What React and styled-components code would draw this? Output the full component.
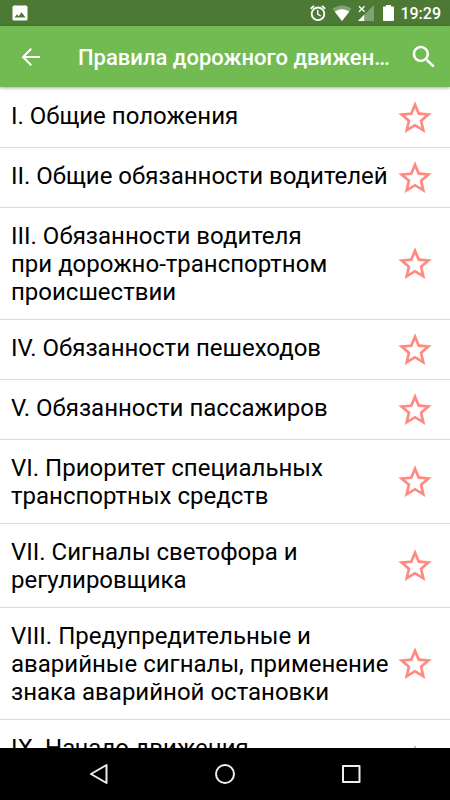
import React, { useState } from "react";
import styled, { createGlobalStyle } from "styled-components";

const GlobalStyle = createGlobalStyle`
  * {
    box-sizing: border-box;
  }
  body {
    margin: 0;
    font-family: Roboto, "Noto Sans", sans-serif;
    background: #fff;
  }
`;

const Screen = styled.div`
  display: flex;
  flex-direction: column;
  height: 100vh;
  overflow: hidden;
`;

const StatusBar = styled.div`
  display: flex;
  align-items: center;
  justify-content: space-between;
  flex: none;
  height: 26px;
  padding: 0 9px 0 12px;
  background: #4c7a34;
  color: #fff;
`;

const StatusIcons = styled.div`
  display: flex;
  align-items: center;
`;

const StatusIcon = styled.svg`
  display: block;
  width: ${props => props.$width}px;
  height: 16px;
  margin-right: ${props => props.$gap || 0}px;
`;

const Clock = styled.time`
  padding-top: 2px;
  font-size: 16px;
  font-weight: 500;
  line-height: 20px;
`;

const Toolbar = styled.header`
  position: relative;
  z-index: 1;
  display: flex;
  align-items: center;
  flex: none;
  height: 61px;
  padding: 0 11px 0 16px;
  background: #72bb53;
  box-shadow: 0 1px 3px rgba(0, 0, 0, 0.35);
`;

const IconButton = styled.button`
  display: flex;
  align-items: center;
  justify-content: center;
  flex: none;
  width: ${props => props.$size}px;
  height: ${props => props.$size}px;
  padding: 0;
  border: 0;
  background: none;
  color: ${props => props.$color || "#fff"};
  cursor: pointer;

  svg {
    display: block;
    width: 100%;
    height: 100%;
  }
`;

const Title = styled.h1`
  flex: 1;
  min-width: 0;
  margin: 0 16px 0 32px;
  padding-top: 2px;
  overflow: hidden;
  color: #fff;
  font-size: 22px;
  font-weight: 500;
  line-height: 28px;
  text-overflow: ellipsis;
  white-space: nowrap;
`;

const List = styled.ul`
  flex: 1;
  min-height: 0;
  margin: 0;
  padding: 1px 0 0;
  overflow: hidden;
  list-style: none;
`;

const Row = styled.li`
  display: flex;
  align-items: center;
  min-height: 60px;
  padding-right: 15px;
  border-bottom: 1px solid #dadada;
`;

const Chapter = styled.a`
  flex: 1;
  align-self: flex-start;
  min-width: 0;
  padding: 14px 0 13px 11px;
  color: #000;
  font-size: 24px;
  line-height: 28px;
  text-decoration: none;
  white-space: pre-line;
`;

const NavBar = styled.nav`
  display: flex;
  align-items: center;
  justify-content: space-between;
  flex: none;
  height: 52px;
  padding: 0 85px;
  background: #000;
`;

const chapters = [
  "I. Общие положения",
  "II. Общие обязанности водителей",
  "III. Обязанности водителя\nпри дорожно-транспортном происшествии",
  "IV. Обязанности пешеходов",
  "V. Обязанности пассажиров",
  "VI. Приоритет специальных транспортных средств",
  "VII. Сигналы светофора и регулировщика",
  "VIII. Предупредительные и аварийные сигналы, применение знака аварийной остановки",
  "IX. Начало движения, маневрирование"
];

const starOutline =
  "M22 9.24l-7.19-.62L12 2 9.19 8.63 2 9.24l5.46 4.73L5.82 21 12 17.27 18.18 21l-1.63-7.03L22 9.24zM12 15.4l-3.76 2.27 1-4.28-3.32-2.88 4.38-.38L12 6.1l1.71 4.04 4.38.38-3.32 2.88 1 4.28L12 15.4z";
const starFull =
  "M12 17.27L18.18 21l-1.64-7.03L22 9.24l-7.19-.61L12 2 9.19 8.63 2 9.24l5.46 4.73L5.82 21z";

const ChapterRow = ({ text, number }) => {
  const [saved, setSaved] = useState(false);
  return (
    <Row>
      <Chapter href={`#chapter-${number}`}>{text}</Chapter>
      <IconButton
        type="button"
        $size={40}
        $color="#ff8a80"
        aria-label={`В избранное: ${text}`}
        aria-pressed={saved}
        onClick={() => setSaved(!saved)}
      >
        <svg viewBox="0 0 24 24" fill="currentColor">
          <path d={saved ? starFull : starOutline} />
        </svg>
      </IconButton>
    </Row>
  );
};

const SystemStatus = () => (
  <StatusBar>
    <StatusIcon $width={16} viewBox="0 0 16 16">
      <rect x="0.5" y="0.5" width="15" height="15" rx="1.5" fill="#fff" />
      <path d="M2.5 12.5l2.5-3.3 1.8 2 2.7-4 4 5.3z" fill="#4c7a34" />
    </StatusIcon>
    <StatusIcons>
      <StatusIcon $width={16} $gap={6} viewBox="0 0 16 16" fill="none" stroke="#fff">
        <circle cx="8" cy="8.8" r="6.3" strokeWidth="1.8" />
        <path d="M0.8 3.7l3.2-2.8M15.2 3.7L12 0.9" strokeWidth="1.8" />
        <path d="M7.7 5v4.2l3 1.8" strokeWidth="1.4" />
      </StatusIcon>
      <StatusIcon $width={20} $gap={6} viewBox="0 0 20 16" fill="#fff">
        <path d="M10 16L0.5 3.7C3 1.8 6.3 0.5 10 0.5s7 1.3 9.5 3.2z" opacity="0.3" />
        <path d="M10 16L2.8 6.7C4.7 5.3 7.2 4.3 10 4.3s5.3 1 7.2 2.4z" />
      </StatusIcon>
      <StatusIcon $width={16} $gap={9} viewBox="0 0 16 16">
        <path d="M16 0v16H0z" fill="#fff" opacity="0.3" />
        <path d="M6.2 9.8V16H0z" fill="#fff" />
        <path d="M1 1.2l5.6 5.6M6.6 1.2L1 6.8" stroke="#fff" strokeWidth="1.3" />
      </StatusIcon>
      <StatusIcon $width={11} $gap={6} viewBox="0 0 11 16" fill="#fff">
        <path d="M3 0h5v1.6h2.2q0.8 0 0.8 0.8v12.8q0 0.8-0.8 0.8H0.8q-0.8 0-0.8-0.8V2.4q0-0.8 0.8-0.8H3z" />
      </StatusIcon>
      <Clock>19:29</Clock>
    </StatusIcons>
  </StatusBar>
);

export default () => (
  <>
    <GlobalStyle />
    <Screen>
      <SystemStatus />
      <Toolbar>
        <IconButton type="button" $size={30} aria-label="Назад">
          <svg viewBox="0 0 30 30" fill="none" stroke="currentColor" strokeWidth="2">
            <path d="M24 15H7.5M15.3 6.7L7 15l8.3 8.3" />
          </svg>
        </IconButton>
        <Title>Правила дорожного движения</Title>
        <IconButton type="button" $size={30} aria-label="Поиск">
          <svg viewBox="0 0 24 24" fill="currentColor">
            <path d="M15.5 14h-.79l-.28-.27C15.41 12.59 16 11.11 16 9.5 16 5.91 13.09 3 9.5 3S3 5.91 3 9.5 5.91 16 9.5 16c1.61 0 3.09-.59 4.23-1.57l.27.28v.79l5 4.99L20.49 19l-4.99-5zm-6 0C7.01 14 5 11.99 5 9.5S7.01 5 9.5 5 14 7.01 14 9.5 11.99 14 9.5 14z" />
          </svg>
        </IconButton>
      </Toolbar>
      <List>
        {chapters.map((text, index) => (
          <ChapterRow key={text} text={text} number={index + 1} />
        ))}
      </List>
      <NavBar>
        <IconButton type="button" $size={28} $color="#eee" aria-label="Системная кнопка «Назад»">
          <svg viewBox="0 0 28 28" fill="none" stroke="currentColor" strokeWidth="2" strokeLinejoin="round">
            <path d="M21.5 5v18L6 14z" />
          </svg>
        </IconButton>
        <IconButton type="button" $size={28} $color="#eee" aria-label="Домой">
          <svg viewBox="0 0 28 28" fill="none" stroke="currentColor" strokeWidth="2">
            <circle cx="14" cy="14" r="9" />
          </svg>
        </IconButton>
        <IconButton type="button" $size={28} $color="#eee" aria-label="Недавние приложения">
          <svg viewBox="0 0 28 28" fill="none" stroke="currentColor" strokeWidth="2" strokeLinejoin="round">
            <rect x="6" y="6" width="16.5" height="16" />
          </svg>
        </IconButton>
      </NavBar>
    </Screen>
  </>
);
